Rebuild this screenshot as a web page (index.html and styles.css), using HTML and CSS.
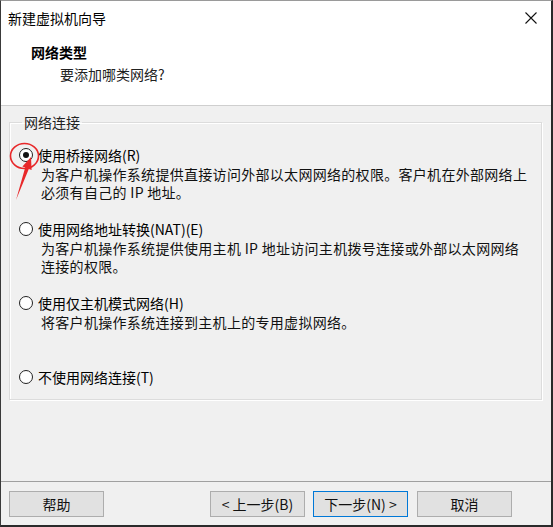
FILE: index.html
```html
<!DOCTYPE html>
<html lang="zh-CN">
<head>
<meta charset="utf-8">
<title>新建虚拟机向导</title>
<link rel="stylesheet" href="styles.css">
</head>
<body>
<div class="window">
  <div class="titlebar">
    <span class="title">新建虚拟机向导</span>
    <svg class="close" width="12" height="12" viewBox="0 0 12 12"><path d="M0.5 0.5 L11.5 11.5 M11.5 0.5 L0.5 11.5" stroke="#111" stroke-width="1.1" fill="none"/></svg>
  </div>
  <div class="header">
    <div class="heading">网络类型</div>
    <div class="subheading">要添加哪类网络?</div>
  </div>
  <div class="content">
    <fieldset class="group">
      <legend class="legend">网络连接</legend>
      <div class="option">
        <div class="opt-label"><span class="radio checked"></span>使用桥接网络(R)</div>
        <div class="opt-desc">为客户机操作系统提供直接访问外部以太网网络的权限。客户机在外部网络上<br>必须有自己的 IP 地址。</div>
      </div>
      <div class="option">
        <div class="opt-label"><span class="radio"></span>使用网络地址转换(NAT)(E)</div>
        <div class="opt-desc">为客户机操作系统提供使用主机 IP 地址访问主机拨号连接或外部以太网网络<br>连接的权限。</div>
      </div>
      <div class="option">
        <div class="opt-label"><span class="radio"></span>使用仅主机模式网络(H)</div>
        <div class="opt-desc">将客户机操作系统连接到主机上的专用虚拟网络。</div>
      </div>
      <div class="option last">
        <div class="opt-label"><span class="radio"></span>不使用网络连接(T)</div>
      </div>
    </fieldset>
  </div>
  <div class="footer">
    <button class="btn">帮助</button>
    <button class="btn back">&lt; 上一步(B)</button>
    <button class="btn primary">下一步(N) &gt;</button>
    <button class="btn">取消</button>
  </div>
  <svg class="annotation" width="60" height="80" viewBox="0 130 60 80">
    <ellipse cx="24.5" cy="156" rx="14" ry="12.5" fill="none" stroke="#e8282a" stroke-width="1.6"/>
    <polygon points="16,200 25.2,167.6 22.4,166.6 31,157 31.6,169.9 28.8,169" fill="#e8282a"/>
  </svg>
</div>
</body>
</html>
```

FILE: styles.css
```css
* { box-sizing: border-box; }
html, body { margin: 0; padding: 0; background: #fff; }
body {
  font-family: "Noto Sans CJK SC", "Noto Sans", sans-serif;
  font-size: 14px;
  color: #000;
}
.window {
  position: relative;
  width: 553px;
  height: 527px;
  display: flex;
  flex-direction: column;
  border-top: 1px solid #9a9a9a;
  border-left: 1px solid #3a3a3a;
  border-right: 2px solid #2a2a2a;
  border-bottom: 2px solid #2a2a2a;
  background: #fff;
}
.titlebar {
  height: 36px;
  display: flex;
  align-items: center;
  justify-content: space-between;
  padding: 0 14px 2px 7px;
}
.title { font-size: 14px; line-height: 20px; }
.close { display: block; }
.header {
  height: 68px;
  padding: 5px 0 0 30px;
}
.heading { font-weight: bold; line-height: 20px; }
.subheading { line-height: 24px; padding-left: 29px; color: #222; }
.content {
  flex: 1;
  background: #f0f0f0;
  border-top: 1px solid #cfcfcf;
  padding: 6px 9px 0 8px;
}
.group {
  margin: 0;
  padding: 13px 0 12px 9px;
  border: 1px solid #dcdcdc;
  box-shadow: 1px 1px 0 #fff, inset 1px 1px 0 #fff;
  min-width: 0;
}
.legend {
  margin-left: 3px;
  padding: 0 2px;
  line-height: 20px;
  color: #222;
}
.option { height: 74px; }
.option.last { height: 20px; }
.opt-label {
  display: flex;
  align-items: center;
  line-height: 20px;
  height: 20px;
}
.radio {
  width: 14px;
  height: 14px;
  border: 1.5px solid #222;
  border-radius: 50%;
  background: #fff;
  margin-right: 5px;
  position: relative;
  flex: none;
}
.radio.checked::after {
  content: "";
  position: absolute;
  left: 2.5px;
  top: 2.5px;
  width: 6px;
  height: 6px;
  border-radius: 50%;
  background: #111;
}
.opt-desc {
  padding-left: 22px;
  margin-top: 0;
  line-height: 18px;
  letter-spacing: 0.3px;
  color: #111;
}
.footer {
  height: 44px;
  background: #f0f0f0;
  border-top: 1px solid #a0a0a0;
  display: flex;
  align-items: flex-start;
  padding: 9px 39px 0 8px;
  gap: 8px;
}
.btn {
  width: 95px;
  height: 26px;
  background: #e1e1e1;
  border: 1px solid #adadad;
  font-family: "Noto Sans CJK SC", "Noto Sans", sans-serif;
  font-size: 14px;
  line-height: 20px;
  color: #111;
  padding: 0;
  margin: 0;
}
.btn.back { margin-left: auto; }
.btn.primary { border-color: #0078d7; margin-right: 1px; }
.annotation {
  position: absolute;
  left: -1px;
  top: 129px;
  pointer-events: none;
}
```
